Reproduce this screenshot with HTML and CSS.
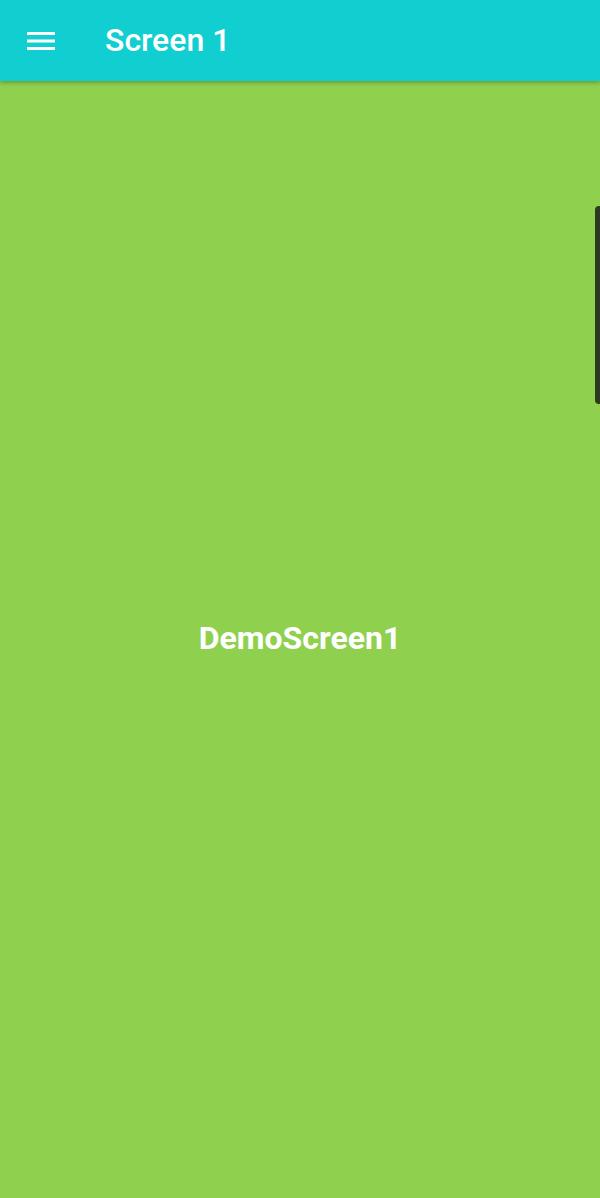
FILE: index.html
```html
<!DOCTYPE html>
<html>
<head>
<meta charset="utf-8">
<link rel="stylesheet" href="styles.css">
</head>
<body>
<div class="app">
  <header class="appbar">
    <button class="menu" aria-label="menu">
      <svg width="28" height="20" viewBox="0 0 28 20"><rect x="0" y="1" width="28" height="3" fill="#fff"/><rect x="0" y="8.5" width="28" height="3" fill="#fff"/><rect x="0" y="16" width="28" height="3" fill="#fff"/></svg>
    </button>
    <h1 class="title">Screen 1</h1>
  </header>
  <main class="content">
    <p class="label">DemoScreen1</p>
  </main>
  <div class="handle"></div>
</div>
</body>
</html>
```
FILE: styles.css
```css
html, body { margin: 0; padding: 0; }
body { font-family: Roboto, "Noto Sans", sans-serif; }
.app { position: relative; width: 600px; height: 1198px; background: #8fd14f; display: flex; flex-direction: column; overflow: hidden; }
.appbar { height: 81px; background: #11cfd0; display: flex; align-items: center; box-shadow: 0 2px 4px rgba(0,0,0,0.25); position: relative; z-index: 1; flex-shrink: 0; }
.menu { background: none; border: 0; padding: 0; margin-left: 27px; width: 28px; height: 20px; display: flex; }
.title { margin: 0 0 2px 50px; color: #fff; font-size: 32px; font-weight: 500; letter-spacing: 0; }
.content { flex: 1; display: flex; align-items: center; justify-content: center; padding-bottom: 4px; }
.label { margin: 0; color: #fff; font-size: 32px; font-weight: 700; }
.handle { position: absolute; right: 0; top: 206px; width: 5px; height: 198px; background: #2e3a20; border-radius: 4px 0 0 4px; }
```
